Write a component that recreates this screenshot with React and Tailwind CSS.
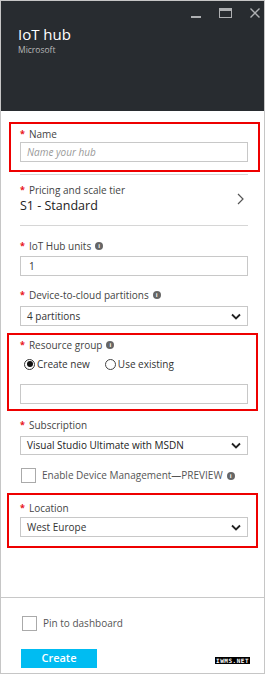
import React from 'react';

const font = { fontFamily: '"Open Sans", "Noto Sans", sans-serif' };

function Info() {
  return (
    <span className="ml-[4px] inline-flex h-[8px] w-[8px] items-center justify-center rounded-full bg-[#666] text-[6px] font-bold leading-none text-white">i</span>
  );
}

function Label({ children, info, star = true }) {
  return (
    <div className="flex h-[14px] items-center text-[10px] leading-[14px] text-[#444]">
      {star && <span className="mr-[4px] text-[9px] font-bold text-[#e81123]">*</span>}
      <span>{children}</span>
      {info && <Info />}
    </div>
  );
}

function Chevron() {
  return (
    <svg width="10" height="7" viewBox="0 0 10 7" className="shrink-0">
      <path d="M1 1.5 L5 5.5 L9 1.5" fill="none" stroke="#222" strokeWidth="1.8" />
    </svg>
  );
}

function Select({ value, h = 'h-[20px]', strong }) {
  return (
    <div className={`flex ${h} w-[228px] items-center justify-between border border-[#c8c8c8] pl-[6px] pr-[6px] text-[10px] ${strong ? 'text-[#222]' : 'text-[#333]'}`}>
      <span>{value}</span>
      <Chevron />
    </div>
  );
}

function Checkbox({ children }) {
  return (
    <div className="flex items-center">
      <span className="h-[15px] w-[15px] border border-[#aaa] bg-white" />
      <span className="ml-[6px] flex items-center text-[10px] text-[#555]">{children}</span>
    </div>
  );
}

export default function App() {
  return (
    <div className="flex h-[674px] w-[265px] flex-col border border-[#c6c6c6] bg-white" style={font}>
      {/* Header */}
      <div className="relative h-[110px] shrink-0 bg-[#282c30] pl-[17px] pt-[24px]">
        <div className="absolute right-[4px] top-[7px] flex items-start gap-[18px]">
          <span className="mt-[8px] h-[2px] w-[10px] bg-[#aeb0b2]" />
          <span className="h-[10px] w-[13px] border-x-[1.5px] border-b-[1.5px] border-t-[3px] border-[#aeb0b2]" />
          <svg width="10" height="10" viewBox="0 0 10 10">
            <path d="M0.5 0.5 L9.5 9.5 M9.5 0.5 L0.5 9.5" stroke="#aeb0b2" strokeWidth="1.4" />
          </svg>
        </div>
        <div className="text-[15px] leading-[19px] text-white">IoT hub</div>
        <div className="mt-[1px] text-[8.5px] leading-[10px] text-[#b8b9ba]">Microsoft</div>
      </div>

      {/* Body */}
      <div className="flex flex-1 flex-col pl-[19px]">
        <div className="ml-[-11px] mt-[11px] w-[251px] border-2 border-[#ee0000] pb-[8px] pl-[9px] pt-[3px]">
          <Label>Name</Label>
          <div className="mt-[1px] flex h-[20px] w-[228px] items-center border border-[#c8c8c8] pl-[6px] text-[10px] italic text-[#999]">
            Name your hub
          </div>
        </div>

        <div className="mt-[2px] h-px w-[228px] bg-[#d6d6d6]" />
        <div className="flex w-[228px] items-center justify-between pt-[8px]">
          <div>
            <Label>Pricing and scale tier</Label>
            <div className="h-[18px] text-[12.5px] leading-[18px] text-[#222]">S1 - Standard</div>
          </div>
          <svg width="7" height="12" viewBox="0 0 7 12" className="mr-[4px]">
            <path d="M1 1 L6 6 L1 11" fill="none" stroke="#555" strokeWidth="1.2" />
          </svg>
        </div>
        <div className="mt-[10px] h-px w-[228px] bg-[#d6d6d6]" />

        <div className="mt-[13px]">
          <Label info>IoT Hub units</Label>
        </div>
        <div className="mt-[3px] flex h-[20px] w-[228px] items-center border border-[#c8c8c8] pl-[8px] text-[10px] text-[#333]">1</div>

        <div className="mt-[12px]">
          <Label info>Device-to-cloud partitions</Label>
        </div>
        <div className="mt-[4px]">
          <Select value="4 partitions" />
        </div>

        <div className="ml-[-13px] mt-[7px] w-[251px] border-2 border-[#ee0000] pb-[5px] pl-[11px] pt-[3px]">
          <Label info>Resource group</Label>
          <div className="mt-[4px] flex h-[16px] items-center text-[10px] text-[#333]">
            <span className="ml-[4px] flex h-[11px] w-[11px] items-center justify-center rounded-full border border-[#333]">
              <span className="h-[6px] w-[6px] rounded-full bg-[#111]" />
            </span>
            <span className="ml-[2px]">Create new</span>
            <span className="ml-[15px] h-[11px] w-[11px] rounded-full border border-[#444]" />
            <span className="ml-[2px]">Use existing</span>
          </div>
          <div className="mt-[12px] h-[20px] w-[228px] border border-[#c8c8c8]" />
        </div>

        <div className="mt-[7px]">
          <Label>Subscription</Label>
        </div>
        <div className="mt-[4px]">
          <Select value="Visual Studio Ultimate with MSDN" h="h-[19px]" strong />
        </div>

        <div className="mt-[13px] ml-[1px]">
          <Checkbox>
            Enable Device Management—PREVIEW<Info />
          </Checkbox>
        </div>

        <div className="ml-[-13px] mt-[10px] w-[251px] border-2 border-[#ee0000] pb-[9px] pl-[11px] pt-[6px]">
          <Label>Location</Label>
          <div className="mt-[2px]">
            <Select value="West Europe" />
          </div>
        </div>
      </div>

      {/* Footer */}
      <div className="relative h-[76px] shrink-0 border-t border-[#c8c8c8] pl-[20px]">
        <div className="mt-[18px] ml-[1px]">
          <Checkbox>Pin to dashboard</Checkbox>
        </div>
        <button className="mt-[18px] flex h-[19px] w-[76px] items-center justify-center bg-[#00bcf2] text-[11px] font-semibold text-white">
          Create
        </button>
        <span className="absolute bottom-[9px] right-[14px] bg-black px-[1px] text-[6px] font-bold leading-[7px] tracking-[0.5px] text-white" style={{ fontFamily: '"DejaVu Sans Mono", monospace' }}>
          IWMS.NET
        </span>
      </div>
    </div>
  );
}
